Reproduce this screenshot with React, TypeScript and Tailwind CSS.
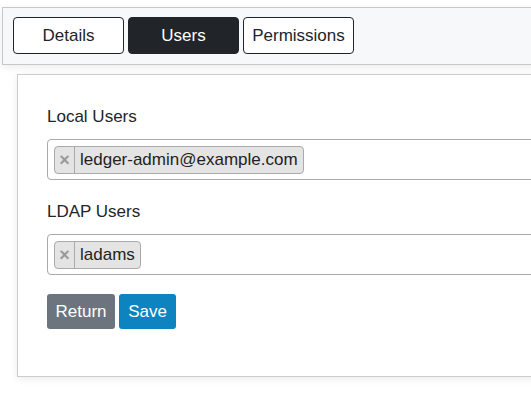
import React from "react";

function Tag({ label }: { label: string }) {
  return (
    <div className="flex h-[28px] items-stretch rounded-[4px] border border-[#aaaaaa] bg-[#e4e4e4] text-[17px] leading-none text-[#222]">
      <span className="flex w-[20px] items-center justify-center border-r border-[#aaaaaa] text-[18px] font-bold text-[#999]">×</span>
      <span className="flex items-center pl-[5px] pr-[5px]">{label}</span>
    </div>
  );
}

function Field({ label, tag }: { label: string; tag: string }) {
  return (
    <div className="flex flex-col">
      <div className="h-[24px] text-[17px] leading-[24px] text-[#212529]">{label}</div>
      <div className="mt-[10px] flex h-[41px] w-[520px] items-center rounded-[4px] border border-[#aaaaaa] bg-white pl-[6px]">
        <Tag label={tag} />
      </div>
    </div>
  );
}

export default function App() {
  return (
    <div className="h-[398px] w-[531px] overflow-hidden bg-white" style={{ fontFamily: '"Liberation Sans", Arial, sans-serif' }}>
      <div className="ml-[2px] mt-[7px] flex h-[58px] w-[600px] items-start gap-[4px] border border-[#c8c8c8] bg-[#f7f8f9] pl-[10px] pt-[9px] shadow-[0_2px_8px_rgba(0,0,0,0.08)]">
        <button className="h-[37px] w-[111px] rounded-[4px] border border-[#212529] bg-white text-[17px] text-[#212529]">Details</button>
        <button className="h-[37px] w-[111px] rounded-[4px] border border-[#212529] bg-[#212529] text-[17px] text-white">Users</button>
        <button className="h-[37px] w-[111px] rounded-[4px] border border-[#212529] bg-white text-[17px] text-[#212529]">Permissions</button>
      </div>
      <div className="ml-[17px] mt-[9px] flex w-[600px] flex-col border border-[#cccccc] bg-white pb-[47px] pl-[29px] pt-[30px] shadow-[0_2px_8px_rgba(0,0,0,0.08)]">
        <Field label="Local Users" tag="ledger-admin@example.com" />
        <div className="mt-[20px]">
          <Field label="LDAP Users" tag="ladams" />
        </div>
        <div className="mt-[19px] flex gap-[4px]">
          <button className="h-[35px] w-[68px] rounded-[3px] bg-[#6c757d] text-[17px] text-white">Return</button>
          <button className="h-[35px] w-[57px] rounded-[3px] bg-[#0d83bf] text-[17px] text-white">Save</button>
        </div>
      </div>
    </div>
  );
}
